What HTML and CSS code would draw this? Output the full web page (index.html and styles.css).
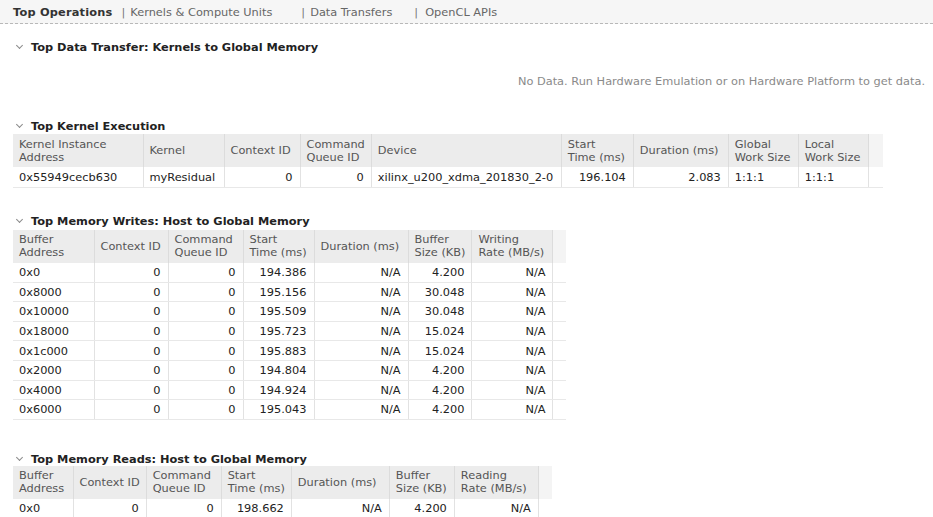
FILE: index.html
```html
<!DOCTYPE html>
<html>
<head>
<meta charset="utf-8">
<link rel="stylesheet" href="styles.css">
</head>
<body>
<div class="tabs">
  <span class="tab active">Top Operations</span>
  <span class="sep s1">|</span><span class="tab">Kernels &amp; Compute Units</span>
  <span class="sep s2">|</span><span class="tab">Data Transfers</span>
  <span class="sep s3">|</span><span class="tab">OpenCL APIs</span>
</div>

<div class="content">
  <section class="sec sec-dt">
    <div class="head"><span class="chev"></span>Top Data Transfer: Kernels to Global Memory</div>
    <div class="nodata">No Data. Run Hardware Emulation or on Hardware Platform to get data.</div>
  </section>

  <section class="sec sec-k">
    <div class="head"><span class="chev"></span>Top Kernel Execution</div>
    <table class="grid">
      <colgroup>
        <col style="width:130px"><col style="width:81px"><col style="width:76px"><col style="width:68px"><col style="width:190px"><col style="width:72px"><col style="width:95px"><col style="width:70px"><col style="width:70px"><col style="width:15px">
      </colgroup>
      <thead>
        <tr><th>Kernel Instance<br>Address</th><th>Kernel</th><th>Context ID</th><th>Command<br>Queue ID</th><th>Device</th><th>Start<br>Time (ms)</th><th>Duration (ms)</th><th>Global<br>Work Size</th><th>Local<br>Work Size</th><th class="fill"></th></tr>
      </thead>
      <tbody>
        <tr class="k"><td>0x55949cecb630</td><td>myResidual</td><td class="r">0</td><td class="r">0</td><td>xilinx_u200_xdma_201830_2-0</td><td class="r">196.104</td><td class="r">2.083</td><td>1:1:1</td><td>1:1:1</td><td class="fill"></td></tr>
      </tbody>
    </table>
  </section>

  <section class="sec sec-w">
    <div class="head"><span class="chev"></span>Top Memory Writes: Host to Global Memory</div>
    <table class="grid">
      <colgroup>
        <col style="width:81px"><col style="width:74px"><col style="width:75px"><col style="width:71px"><col style="width:94px"><col style="width:63px"><col style="width:81px"><col style="width:8px">
      </colgroup>
      <thead>
        <tr><th>Buffer<br>Address</th><th>Context ID</th><th>Command<br>Queue ID</th><th>Start<br>Time (ms)</th><th>Duration (ms)</th><th>Buffer<br>Size (KB)</th><th>Writing<br>Rate (MB/s)</th><th class="fill"></th></tr>
      </thead>
      <tbody>
        <tr><td>0x0</td><td class="r">0</td><td class="r">0</td><td class="r">194.386</td><td class="r">N/A</td><td class="r">4.200</td><td class="r">N/A</td><td class="fill"></td></tr>
        <tr><td>0x8000</td><td class="r">0</td><td class="r">0</td><td class="r">195.156</td><td class="r">N/A</td><td class="r">30.048</td><td class="r">N/A</td><td class="fill"></td></tr>
        <tr><td>0x10000</td><td class="r">0</td><td class="r">0</td><td class="r">195.509</td><td class="r">N/A</td><td class="r">30.048</td><td class="r">N/A</td><td class="fill"></td></tr>
        <tr><td>0x18000</td><td class="r">0</td><td class="r">0</td><td class="r">195.723</td><td class="r">N/A</td><td class="r">15.024</td><td class="r">N/A</td><td class="fill"></td></tr>
        <tr><td>0x1c000</td><td class="r">0</td><td class="r">0</td><td class="r">195.883</td><td class="r">N/A</td><td class="r">15.024</td><td class="r">N/A</td><td class="fill"></td></tr>
        <tr><td>0x2000</td><td class="r">0</td><td class="r">0</td><td class="r">194.804</td><td class="r">N/A</td><td class="r">4.200</td><td class="r">N/A</td><td class="fill"></td></tr>
        <tr><td>0x4000</td><td class="r">0</td><td class="r">0</td><td class="r">194.924</td><td class="r">N/A</td><td class="r">4.200</td><td class="r">N/A</td><td class="fill"></td></tr>
        <tr><td>0x6000</td><td class="r">0</td><td class="r">0</td><td class="r">195.043</td><td class="r">N/A</td><td class="r">4.200</td><td class="r">N/A</td><td class="fill"></td></tr>
      </tbody>
    </table>
  </section>

  <section class="sec sec-r">
    <div class="head"><span class="chev"></span>Top Memory Reads: Host to Global Memory</div>
    <table class="grid">
      <colgroup>
        <col style="width:60px"><col style="width:73px"><col style="width:75px"><col style="width:68px"><col style="width:98px"><col style="width:65px"><col style="width:84px"><col style="width:8px">
      </colgroup>
      <thead>
        <tr><th>Buffer<br>Address</th><th>Context ID</th><th>Command<br>Queue ID</th><th>Start<br>Time (ms)</th><th>Duration (ms)</th><th>Buffer<br>Size (KB)</th><th>Reading<br>Rate (MB/s)</th><th class="fill"></th></tr>
      </thead>
      <tbody>
        <tr><td>0x0</td><td class="r">0</td><td class="r">0</td><td class="r">198.662</td><td class="r">N/A</td><td class="r">4.200</td><td class="r">N/A</td><td class="fill"></td></tr>
      </tbody>
    </table>
  </section>
</div>
</body>
</html>
```

FILE: styles.css
```css
* { box-sizing: border-box; }

html, body {
  margin: 0;
  padding: 0;
  background: #ffffff;
}

body {
  font-family: "DejaVu Sans", "Noto Sans", sans-serif;
  font-size: 11.35px;
  color: #222222;
  width: 933px;
  height: 517px;
  overflow: hidden;
}

.tabs {
  height: 24px;
  display: flex;
  align-items: center;
  padding: 0 0 0 13px;
  background: #f6f6f6;
  border-bottom: 1px dashed #b8b8b8;
  color: #666666;
  white-space: nowrap;
}

.tab.active {
  font-weight: bold;
  color: #333333;
  letter-spacing: 0.2px;
}

.sep {
  color: #777777;
}

.sep.s1 { margin: 0 5px 0 9px; }
.sep.s2 { margin: 0 5px 0 29px; }
.sep.s3 { margin: 0 7px 0 22px; }

.content {
  padding: 0 0 0 13px;
}

.sec { display: flex; flex-direction: column; }

.head {
  display: flex;
  align-items: center;
  height: 14px;
  font-weight: bold;
  color: #222222;
  white-space: nowrap;
}

.chev {
  width: 5px;
  height: 5px;
  margin: 0 9px 3px 4px;
  border-right: 1px solid #8a8a8a;
  border-bottom: 1px solid #8a8a8a;
  transform: rotate(45deg);
}

.sec-dt { margin-top: 16px; }
.sec-k { margin-top: 0; }
.sec-w { margin-top: 26px; }
.sec-r { margin-top: 32px; }

.sec-k .head { margin-bottom: 1px; }
.sec-w .head { margin-bottom: 2px; }
.sec-r .head { margin-bottom: 0; }

.nodata {
  margin-top: 20px;
  height: 14px;
  margin-bottom: 31px;
  text-align: right;
  padding-right: 8px;
  color: #8a8a8a;
}

.grid {
  border-collapse: collapse;
  table-layout: fixed;
  width: max-content;
}

.grid th {
  height: 33px;
  padding: 0 6px;
  background: #ececec;
  border-left: 1px solid #dcdcdc;
  color: #555555;
  font-weight: normal;
  text-align: left;
  line-height: 13px;
  white-space: nowrap;
}

.grid th:first-child,
.grid td:first-child { border-left: none; }

.grid th.fill { background: #f4f4f4; }

.grid td {
  height: 19.6px;
  padding: 0 7px 0 6px;
  border-left: 1px solid #e2e2e2;
  border-bottom: 1px solid #e8e8e8;
  white-space: nowrap;
  overflow: hidden;
}

.grid tr.k td { height: 20px; }

.grid td.r { text-align: right; }

.grid td.fill {
  background: #ffffff;
}
```
